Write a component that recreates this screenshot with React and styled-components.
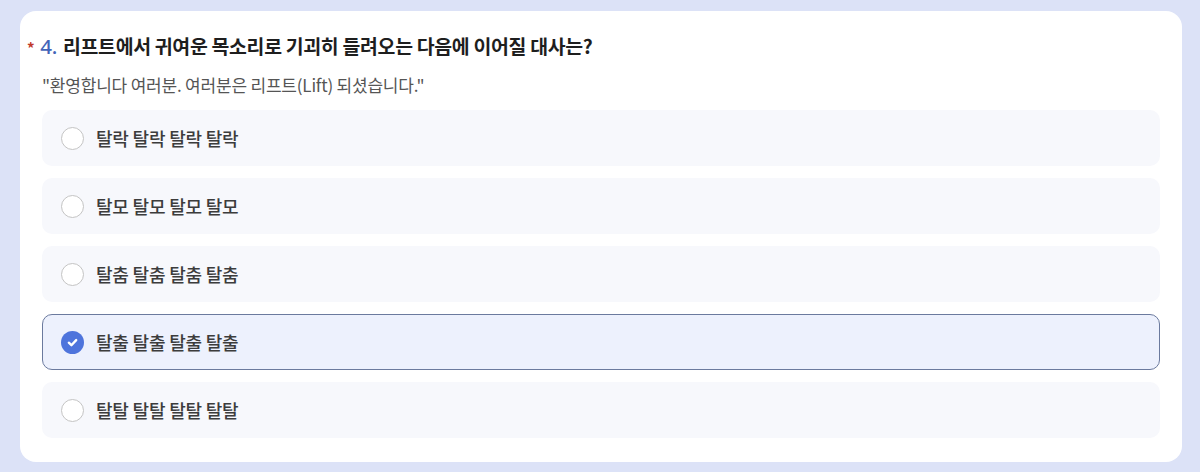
import React, { useState } from "react";
import styled, { createGlobalStyle } from "styled-components";

const GlobalStyle = createGlobalStyle`
  html, body {
    margin: 0;
    padding: 0;
    background: #dce2f7;
  }
  body {
    font-family: "Noto Sans CJK KR", "Noto Sans", sans-serif;
  }
`;

const Page = styled.div`
  width: 1200px;
  height: 472px;
  box-sizing: border-box;
  padding: 11px 18px 10px 20px;
  background: #dce2f7;
`;

const Card = styled.div`
  height: 100%;
  box-sizing: border-box;
  background: #fff;
  border-radius: 16px;
  padding: 18px 22px 0 7px;
  display: flex;
  flex-direction: column;
`;

const Title = styled.h2`
  margin: 0;
  display: flex;
  align-items: baseline;
  font-size: 19.4px;
  font-weight: 700;
  color: #1e1e1e;
  letter-spacing: -0.3px;
  line-height: 34px;
`;

const Star = styled.span`
  color: #c0392b;
  font-size: 15px;
  margin-right: 6px;
`;

const Num = styled.span`
  color: #4364b8;
  font-family: "Noto Sans", sans-serif;
  font-weight: 500;
  font-size: 20.5px;
  margin-right: 6px;
`;

const Quote = styled.p`
  margin: 6px 0 0 15px;
  font-size: 17px;
  color: #555;
  line-height: 27px;
  letter-spacing: -0.2px;
`;

const Options = styled.div`
  margin: 12px 0 0 15px;
  display: flex;
  flex-direction: column;
  gap: 12px;
`;

const Option = styled.label`
  height: 56px;
  box-sizing: border-box;
  display: flex;
  align-items: center;
  gap: 12px;
  padding: 0 18px;
  border-radius: 10px;
  cursor: pointer;
  background: ${(p) => (p.$checked ? "#edf1fd" : "#f7f8fc")};
  border: 1px solid ${(p) => (p.$checked ? "#6b7a9e" : "transparent")};
`;

const Radio = styled.span`
  width: 23px;
  height: 23px;
  box-sizing: border-box;
  border-radius: 50%;
  flex-shrink: 0;
  display: flex;
  align-items: center;
  justify-content: center;
  background: ${(p) => (p.$checked ? "#4e74dc" : "#fff")};
  border: ${(p) => (p.$checked ? "none" : "1.5px solid #c4c4c4")};
`;

const Label = styled.span`
  font-size: 18px;
  font-weight: 500;
  color: #3c3c3c;
  letter-spacing: -0.2px;
`;

const choices = [
  "탈락 탈락 탈락 탈락",
  "탈모 탈모 탈모 탈모",
  "탈춤 탈춤 탈춤 탈춤",
  "탈출 탈출 탈출 탈출",
  "탈탈 탈탈 탈탈 탈탈",
];

export default function App() {
  const [selected, setSelected] = useState(3);

  return (
    <Page>
      <GlobalStyle />
      <Card>
        <Title>
          <Star>*</Star>
          <Num>4.</Num>
          리프트에서 귀여운 목소리로 기괴히 들려오는 다음에 이어질 대사는?
        </Title>
        <Quote>"환영합니다 여러분. 여러분은 리프트(Lift) 되셨습니다."</Quote>
        <Options>
          {choices.map((c, i) => (
            <Option key={c} $checked={selected === i} onClick={() => setSelected(i)}>
              <Radio $checked={selected === i}>
                {selected === i && (
                  <svg width="13" height="13" viewBox="0 0 12 12">
                    <path d="M2.6 6.2 L5 8.5 L9.4 3.8" fill="none" stroke="#fff" strokeWidth="2.2" strokeLinecap="round" strokeLinejoin="round" />
                  </svg>
                )}
              </Radio>
              <Label>{c}</Label>
            </Option>
          ))}
        </Options>
      </Card>
    </Page>
  );
}
